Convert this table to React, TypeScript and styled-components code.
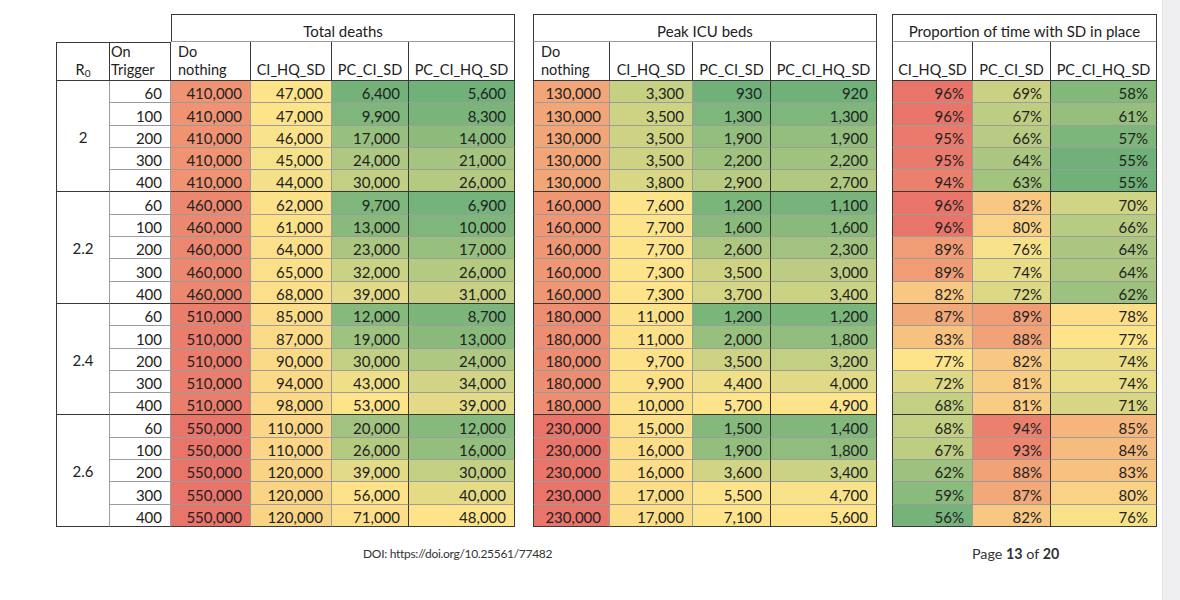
import React from "react";
import styled, { createGlobalStyle } from "styled-components";

const DARK = "#383838";
const GRID = "#9c9c9c";

const GREEN = [112, 177, 121];
const YELLOW = [253, 228, 138];
const RED = [233, 116, 106];

type Group = { r0: string; rows: number[][] };

// trigger, deaths x4, icu x4, sd x3
const groups: Group[] = [
  {
    r0: "2",
    rows: [
      [60, 410000, 47000, 6400, 5600, 130000, 3300, 930, 920, 96, 69, 58],
      [100, 410000, 47000, 9900, 8300, 130000, 3500, 1300, 1300, 96, 67, 61],
      [200, 410000, 46000, 17000, 14000, 130000, 3500, 1900, 1900, 95, 66, 57],
      [300, 410000, 45000, 24000, 21000, 130000, 3500, 2200, 2200, 95, 64, 55],
      [400, 410000, 44000, 30000, 26000, 130000, 3800, 2900, 2700, 94, 63, 55],
    ],
  },
  {
    r0: "2.2",
    rows: [
      [60, 460000, 62000, 9700, 6900, 160000, 7600, 1200, 1100, 96, 82, 70],
      [100, 460000, 61000, 13000, 10000, 160000, 7700, 1600, 1600, 96, 80, 66],
      [200, 460000, 64000, 23000, 17000, 160000, 7700, 2600, 2300, 89, 76, 64],
      [300, 460000, 65000, 32000, 26000, 160000, 7300, 3500, 3000, 89, 74, 64],
      [400, 460000, 68000, 39000, 31000, 160000, 7300, 3700, 3400, 82, 72, 62],
    ],
  },
  {
    r0: "2.4",
    rows: [
      [60, 510000, 85000, 12000, 8700, 180000, 11000, 1200, 1200, 87, 89, 78],
      [100, 510000, 87000, 19000, 13000, 180000, 11000, 2000, 1800, 83, 88, 77],
      [200, 510000, 90000, 30000, 24000, 180000, 9700, 3500, 3200, 77, 82, 74],
      [300, 510000, 94000, 43000, 34000, 180000, 9900, 4400, 4000, 72, 81, 74],
      [400, 510000, 98000, 53000, 39000, 180000, 10000, 5700, 4900, 68, 81, 71],
    ],
  },
  {
    r0: "2.6",
    rows: [
      [60, 550000, 110000, 20000, 12000, 230000, 15000, 1500, 1400, 68, 94, 85],
      [100, 550000, 110000, 26000, 16000, 230000, 16000, 1900, 1800, 67, 93, 84],
      [200, 550000, 120000, 39000, 30000, 230000, 16000, 3600, 3400, 62, 88, 83],
      [300, 550000, 120000, 56000, 40000, 230000, 17000, 5500, 4700, 59, 87, 80],
      [400, 550000, 120000, 71000, 48000, 230000, 17000, 7100, 5600, 56, 82, 76],
    ],
  },
];

const rows = groups.flatMap((g) => g.rows);

const mix = (a: number[], b: number[], t: number) =>
  `rgb(${a.map((v, i) => Math.round(v + (b[i] - v) * t)).join(",")})`;

// three colour scale like a spreadsheet: min green, median yellow, max red
const makeScale = (values: number[]) => {
  const s = [...values].sort((a, b) => a - b);
  const pos = 0.5 * (s.length - 1);
  const lo = Math.floor(pos);
  const mid = s[lo] + (s[Math.ceil(pos)] - s[lo]) * (pos - lo);
  const min = s[0];
  const max = s[s.length - 1];
  return (v: number) =>
    v <= mid
      ? mix(GREEN, YELLOW, mid === min ? 1 : (v - min) / (mid - min))
      : mix(YELLOW, RED, (v - mid) / (max - mid));
};

const GlobalStyle = createGlobalStyle`
  html, body {
    margin: 0;
    padding: 0;
    background: #ffffff;
  }
  body {
    font-family: Lato, "Liberation Sans", sans-serif;
    font-size: 15px;
    color: #222222;
  }
`;

const Shell = styled.div`
  display: flex;
  width: 1180px;
  height: 600px;
  overflow: hidden;
`;

const Page = styled.div`
  width: 1162px;
  height: 600px;
  background: #ffffff;
  box-sizing: border-box;
  padding: 14px 0 0 56px;
`;

const Strip = styled.div`
  flex: 1;
  background: #efeff1;
  border-left: 1px solid #e6e6e9;
`;

const Tables = styled.div`
  display: flex;
  align-items: flex-start;
`;

const Grid = styled.div<{ $cols: string; $offset: number }>`
  display: grid;
  grid-template-columns: ${(p) => p.$cols};
  grid-template-rows: 28px 39px repeat(20, 22.3px);
  margin-left: ${(p) => p.$offset}px;
`;

const Blank = styled.div<{ $span: number }>`
  grid-column: span ${(p) => p.$span};
`;

const Title = styled.div<{ $span: number }>`
  grid-column: span ${(p) => p.$span};
  box-sizing: border-box;
  display: flex;
  justify-content: center;
  align-items: flex-end;
  padding-bottom: 2px;
  line-height: 15px;
  border: 1px solid ${DARK};
  border-bottom-color: ${GRID};
  white-space: nowrap;
`;

const Head = styled.div<{ $first?: boolean; $top?: boolean; $align: "left" | "center"; $pad: number }>`
  box-sizing: border-box;
  display: flex;
  align-items: flex-end;
  justify-content: ${(p) => (p.$align === "left" ? "flex-start" : "center")};
  text-align: ${(p) => p.$align};
  padding: 0 2px 2px ${(p) => p.$pad}px;
  font-size: 14.5px;
  line-height: 17.5px;
  white-space: nowrap;
  border-right: 1px solid ${DARK};
  border-bottom: 1px solid ${DARK};
  border-left: ${(p) => (p.$first ? `1px solid ${DARK}` : "none")};
  border-top: ${(p) => (p.$top ? `1px solid ${DARK}` : "none")};
`;

const Sub = styled.sub`
  font-size: 10px;
  vertical-align: -2px;
  line-height: 0;
`;

const Num = styled.div<{ $bg: string; $first?: boolean; $darkRight?: boolean; $darkBottom?: boolean }>`
  box-sizing: border-box;
  display: flex;
  align-items: flex-end;
  justify-content: flex-end;
  padding: 0 8px 1px 2px;
  line-height: 15px;
  white-space: nowrap;
  background: ${(p) => p.$bg};
  border-right: 1px solid ${(p) => (p.$darkRight ? DARK : GRID)};
  border-bottom: 1px solid ${(p) => (p.$darkBottom ? DARK : GRID)};
  border-left: ${(p) => (p.$first ? `1px solid ${DARK}` : "none")};
`;

const GroupCell = styled.div`
  grid-row: span 5;
  box-sizing: border-box;
  display: flex;
  align-items: center;
  justify-content: center;
  padding-top: 1px;
  border-left: 1px solid ${DARK};
  border-right: 1px solid ${GRID};
  border-bottom: 1px solid ${DARK};
`;

const Footer = styled.div`
  display: grid;
  grid-template-columns: 609px auto;
  align-items: center;
  margin: 18px 0 0 307px;
  line-height: 18px;
  color: #333333;
`;

const Doi = styled.span`
  font-size: 12px;
  letter-spacing: -0.3px;
`;

const PageNo = styled.span`
  font-size: 14.3px;
`;

const heads = ["Do nothing", "CI_HQ_SD", "PC_CI_SD", "PC_CI_HQ_SD"];

type PanelProps = {
  title: string;
  labels: string[];
  widths: number[];
  from: number;
  lead?: boolean;
  offset: number;
  format: (v: number) => string;
};

const Panel = ({ title, labels, widths, from, lead, offset, format }: PanelProps) => {
  const n = labels.length;
  const cols = rows.map((r) => r.slice(from, from + n));
  const scale = makeScale(cols.flat());
  return (
    <Grid $cols={widths.map((w) => `${w}px`).join(" ")} $offset={offset}>
      {lead && <Blank $span={2} />}
      <Title $span={n}>{title}</Title>
      {lead && (
        <>
          <Head $first $top $align="center" $pad={2}>
            <span>
              R<Sub>0</Sub>
            </span>
          </Head>
          <Head $top $align="left" $pad={1}>
            <span>
              On
              <br />
              Trigger
            </span>
          </Head>
        </>
      )}
      {labels.map((l, i) => (
        <Head key={l} $first={!lead && i === 0} $align={l === "Do nothing" ? "left" : "center"} $pad={l === "Do nothing" ? 7 : 2}>
          {l === "Do nothing" ? (
            <span>
              Do
              <br />
              nothing
            </span>
          ) : (
            <span>{l}</span>
          )}
        </Head>
      ))}
      {cols.map((vals, r) => (
        <React.Fragment key={r}>
          {lead && r % 5 === 0 && <GroupCell>{groups[r / 5].r0}</GroupCell>}
          {lead && (
            <Num $bg="#ffffff" $darkBottom={r % 5 === 4}>
              {rows[r][0]}
            </Num>
          )}
          {vals.map((v, c) => (
            <Num
              key={c}
              $bg={scale(v)}
              $first={!lead && c === 0}
              $darkRight={c >= n - 2}
              $darkBottom={r % 5 === 4}
            >
              {format(v)}
            </Num>
          ))}
        </React.Fragment>
      ))}
    </Grid>
  );
};

const thousands = (v: number) => v.toLocaleString("en-US");
const percent = (v: number) => `${v}%`;

export default function App() {
  return (
    <Shell>
      <GlobalStyle />
      <Page>
        <Tables>
          <Panel
            title="Total deaths"
            labels={heads}
            widths={[54, 61, 80, 81, 77, 106]}
            from={1}
            lead
            offset={0}
            format={thousands}
          />
          <Panel title="Peak ICU beds" labels={heads} widths={[77, 83, 78, 106]} from={5} offset={18} format={thousands} />
          <Panel
            title="Proportion of time with SD in place"
            labels={heads.slice(1)}
            widths={[81, 78, 106]}
            from={9}
            offset={15}
            format={percent}
          />
        </Tables>
        <Footer>
          <Doi>DOI: https://doi.org/10.25561/77482</Doi>
          <PageNo>
            Page <b>13</b> of <b>20</b>
          </PageNo>
        </Footer>
      </Page>
      <Strip />
    </Shell>
  );
}
